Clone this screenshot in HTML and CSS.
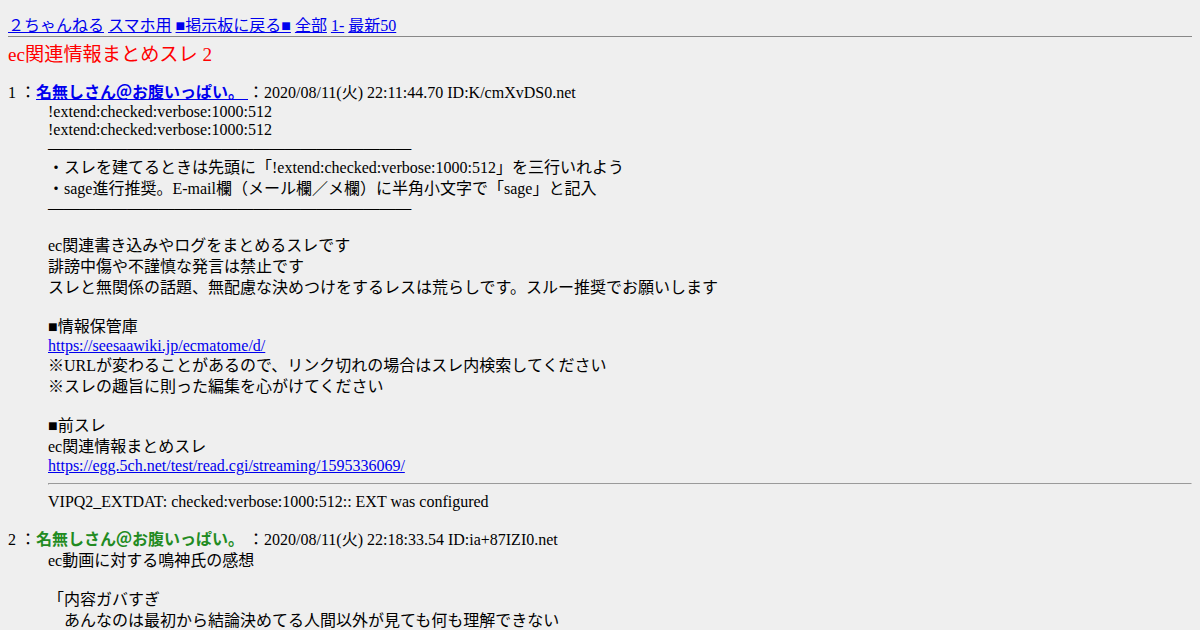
FILE: index.html
```html
<!DOCTYPE html>
<html lang="ja">
  <head>
    <meta charset="UTF-8" />
    <title>ec関連情報まとめスレ 2</title>
    <link rel="stylesheet" href="styles.css">
  </head>
  <body>
    <div class="nav">
      <a href="#">２ちゃんねる</a> <a href="#">スマホ用</a> <a href="#">■掲示板に戻る■</a> <a href="#">全部</a> <a href="#">1-</a> <a href="#">最新50</a>
    </div>
    <hr class="topline">
    <h1 class="title">ec関連情報まとめスレ 2</h1>
    <dl class="thread">
      <dt>1 ：<a href="#" class="name"><b>名無しさん＠お腹いっぱい。 </b></a>：2020/08/11(火) 22:11:44.70 ID:K/cmXvDS0.net</dt>
      <dd>!extend:checked:verbose:1000:512<br>
        !extend:checked:verbose:1000:512<br>
        <span class="bar">―――――――――――――――――――――――</span><br>
        <span class="j">・スレを建てるときは先頭に「!extend:checked:verbose:1000:512」を三行いれよう</span><br>
        <span class="j">・sage進行推奨。E-mail欄（メール欄／メ欄）に半角小文字で「sage」と記入</span><br>
        <span class="bar">―――――――――――――――――――――――</span><br>
        <br>
        <span class="j">ec関連書き込みやログをまとめるスレです</span><br>
        <span class="j">誹謗中傷や不謹慎な発言は禁止です</span><br>
        <span class="j">スレと無関係の話題、無配慮な決めつけをするレスは荒らしです。スルー推奨でお願いします</span><br>
        <br>
        <span class="j">■情報保管庫</span><br>
        <a href="#">https://seesaawiki.jp/ecmatome/d/</a><br>
        <span class="j">※URLが変わることがあるので、リンク切れの場合はスレ内検索してください</span><br>
        <span class="j">※スレの趣旨に則った編集を心がけてください</span><br>
        <br>
        <span class="j">■前スレ</span><br>
        <span class="j">ec関連情報まとめスレ</span><br>
        <a href="#">https://egg.5ch.net/test/read.cgi/streaming/1595336069/</a>
        <hr>VIPQ2_EXTDAT: checked:verbose:1000:512:: EXT was configured<br>
        <br>
      </dd>
      <dt>2 ：<span class="name2"><b>名無しさん＠お腹いっぱい。</b></span> ：2020/08/11(火) 22:18:33.54 ID:ia+87IZI0.net</dt>
      <dd><span class="j">ec動画に対する鳴神氏の感想</span><br>
        <br>
        <span class="j">「内容ガバすぎ</span><br>
        <span class="j">　あんなのは最初から結論決めてる人間以外が見ても何も理解できない</span><br>
      </dd>
    </dl>
  </body>
</html>
```

FILE: styles.css
```css
body {
  background-color: #efefef;
  color: #000;
  margin: 8px;
  font-family: "Liberation Serif", "Noto Sans CJK JP", serif;
  font-size: 16px;
}
a {
  color: #0000ee;
}
.nav {
  margin-top: 7px;
  line-height: 21px;
}
.topline {
  border: 0;
  height: 1px;
  background-color: #888;
  margin: 0;
}
.title {
  color: red;
  font-size: 19.2px;
  font-weight: normal;
  line-height: 24px;
  margin: 6px 0 0;
}
.thread {
  margin: 15px 0 0;
}
.thread dt {
  line-height: 21px;
}
.thread dd {
  margin-left: 40px;
  line-height: 18px;
}
.j {
  line-height: 21px;
}
.bar {
  letter-spacing: -0.22px;
}
.thread hr {
  margin: 8px 0;
}
.name2 {
  color: #228b22;
}
```
